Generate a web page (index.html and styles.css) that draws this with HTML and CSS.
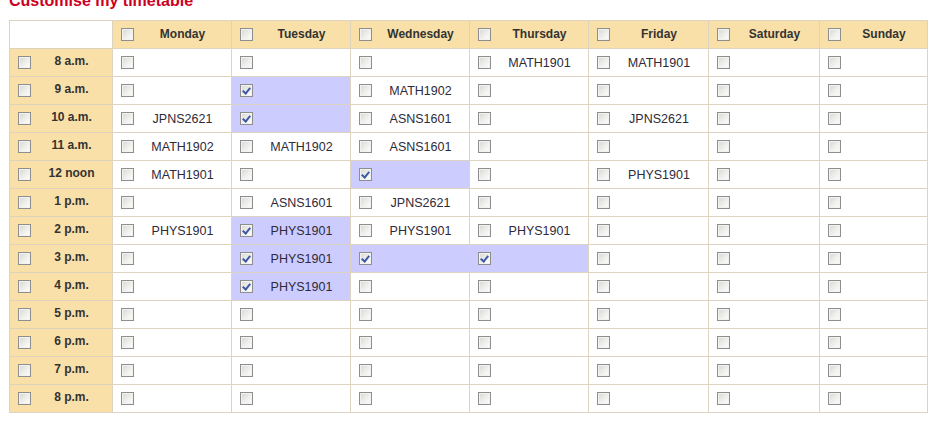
FILE: index.html
```html
<!DOCTYPE html>
<html lang="en">
<head>
<meta charset="utf-8">
<title>Customise my timetable</title>
<link rel="stylesheet" href="styles.css">
</head>
<body>
<div class="page">
<h2 class="title">Customise my timetable</h2>
<table class="tt">
<colgroup>
<col class="c-time"><col class="c-day"><col class="c-day"><col class="c-day"><col class="c-day"><col class="c-fri"><col class="c-sat"><col class="c-sun">
</colgroup>
<thead>
<tr>
<th class="corner"></th>
<th class="day"><label class="cell"><input type="checkbox" class="cb"><span class="txt">Monday</span></label></th>
<th class="day"><label class="cell"><input type="checkbox" class="cb"><span class="txt">Tuesday</span></label></th>
<th class="day"><label class="cell"><input type="checkbox" class="cb"><span class="txt">Wednesday</span></label></th>
<th class="day"><label class="cell"><input type="checkbox" class="cb"><span class="txt">Thursday</span></label></th>
<th class="day"><label class="cell"><input type="checkbox" class="cb"><span class="txt">Friday</span></label></th>
<th class="day"><label class="cell"><input type="checkbox" class="cb"><span class="txt">Saturday</span></label></th>
<th class="day"><label class="cell"><input type="checkbox" class="cb"><span class="txt">Sunday</span></label></th>
</tr>
</thead>
<tbody>
<tr>
<th class="time"><label class="cell"><input type="checkbox" class="cb"><span class="txt">8 a.m.</span></label></th>
<td><label class="cell"><input type="checkbox" class="cb"><span class="code"></span></label></td>
<td><label class="cell"><input type="checkbox" class="cb"><span class="code"></span></label></td>
<td><label class="cell"><input type="checkbox" class="cb"><span class="code"></span></label></td>
<td><label class="cell"><input type="checkbox" class="cb"><span class="code">MATH1901</span></label></td>
<td><label class="cell"><input type="checkbox" class="cb"><span class="code">MATH1901</span></label></td>
<td><label class="cell"><input type="checkbox" class="cb"><span class="code"></span></label></td>
<td><label class="cell"><input type="checkbox" class="cb"><span class="code"></span></label></td>
</tr>
<tr>
<th class="time"><label class="cell"><input type="checkbox" class="cb"><span class="txt">9 a.m.</span></label></th>
<td><label class="cell"><input type="checkbox" class="cb"><span class="code"></span></label></td>
<td class="on"><label class="cell"><input type="checkbox" class="cb" checked><span class="code"></span></label></td>
<td><label class="cell"><input type="checkbox" class="cb"><span class="code">MATH1902</span></label></td>
<td><label class="cell"><input type="checkbox" class="cb"><span class="code"></span></label></td>
<td><label class="cell"><input type="checkbox" class="cb"><span class="code"></span></label></td>
<td><label class="cell"><input type="checkbox" class="cb"><span class="code"></span></label></td>
<td><label class="cell"><input type="checkbox" class="cb"><span class="code"></span></label></td>
</tr>
<tr>
<th class="time"><label class="cell"><input type="checkbox" class="cb"><span class="txt">10 a.m.</span></label></th>
<td><label class="cell"><input type="checkbox" class="cb"><span class="code">JPNS2621</span></label></td>
<td class="on"><label class="cell"><input type="checkbox" class="cb" checked><span class="code"></span></label></td>
<td><label class="cell"><input type="checkbox" class="cb"><span class="code">ASNS1601</span></label></td>
<td><label class="cell"><input type="checkbox" class="cb"><span class="code"></span></label></td>
<td><label class="cell"><input type="checkbox" class="cb"><span class="code">JPNS2621</span></label></td>
<td><label class="cell"><input type="checkbox" class="cb"><span class="code"></span></label></td>
<td><label class="cell"><input type="checkbox" class="cb"><span class="code"></span></label></td>
</tr>
<tr>
<th class="time"><label class="cell"><input type="checkbox" class="cb"><span class="txt">11 a.m.</span></label></th>
<td><label class="cell"><input type="checkbox" class="cb"><span class="code">MATH1902</span></label></td>
<td><label class="cell"><input type="checkbox" class="cb"><span class="code">MATH1902</span></label></td>
<td><label class="cell"><input type="checkbox" class="cb"><span class="code">ASNS1601</span></label></td>
<td><label class="cell"><input type="checkbox" class="cb"><span class="code"></span></label></td>
<td><label class="cell"><input type="checkbox" class="cb"><span class="code"></span></label></td>
<td><label class="cell"><input type="checkbox" class="cb"><span class="code"></span></label></td>
<td><label class="cell"><input type="checkbox" class="cb"><span class="code"></span></label></td>
</tr>
<tr>
<th class="time"><label class="cell"><input type="checkbox" class="cb"><span class="txt">12 noon</span></label></th>
<td><label class="cell"><input type="checkbox" class="cb"><span class="code">MATH1901</span></label></td>
<td><label class="cell"><input type="checkbox" class="cb"><span class="code"></span></label></td>
<td class="on"><label class="cell"><input type="checkbox" class="cb" checked><span class="code"></span></label></td>
<td><label class="cell"><input type="checkbox" class="cb"><span class="code"></span></label></td>
<td><label class="cell"><input type="checkbox" class="cb"><span class="code">PHYS1901</span></label></td>
<td><label class="cell"><input type="checkbox" class="cb"><span class="code"></span></label></td>
<td><label class="cell"><input type="checkbox" class="cb"><span class="code"></span></label></td>
</tr>
<tr>
<th class="time"><label class="cell"><input type="checkbox" class="cb"><span class="txt">1 p.m.</span></label></th>
<td><label class="cell"><input type="checkbox" class="cb"><span class="code"></span></label></td>
<td><label class="cell"><input type="checkbox" class="cb"><span class="code">ASNS1601</span></label></td>
<td><label class="cell"><input type="checkbox" class="cb"><span class="code">JPNS2621</span></label></td>
<td><label class="cell"><input type="checkbox" class="cb"><span class="code"></span></label></td>
<td><label class="cell"><input type="checkbox" class="cb"><span class="code"></span></label></td>
<td><label class="cell"><input type="checkbox" class="cb"><span class="code"></span></label></td>
<td><label class="cell"><input type="checkbox" class="cb"><span class="code"></span></label></td>
</tr>
<tr>
<th class="time"><label class="cell"><input type="checkbox" class="cb"><span class="txt">2 p.m.</span></label></th>
<td><label class="cell"><input type="checkbox" class="cb"><span class="code">PHYS1901</span></label></td>
<td class="on"><label class="cell"><input type="checkbox" class="cb" checked><span class="code">PHYS1901</span></label></td>
<td><label class="cell"><input type="checkbox" class="cb"><span class="code">PHYS1901</span></label></td>
<td><label class="cell"><input type="checkbox" class="cb"><span class="code">PHYS1901</span></label></td>
<td><label class="cell"><input type="checkbox" class="cb"><span class="code"></span></label></td>
<td><label class="cell"><input type="checkbox" class="cb"><span class="code"></span></label></td>
<td><label class="cell"><input type="checkbox" class="cb"><span class="code"></span></label></td>
</tr>
<tr>
<th class="time"><label class="cell"><input type="checkbox" class="cb"><span class="txt">3 p.m.</span></label></th>
<td><label class="cell"><input type="checkbox" class="cb"><span class="code"></span></label></td>
<td class="on"><label class="cell"><input type="checkbox" class="cb" checked><span class="code">PHYS1901</span></label></td>
<td class="on"><label class="cell"><input type="checkbox" class="cb" checked><span class="code"></span></label></td>
<td class="on"><label class="cell"><input type="checkbox" class="cb" checked><span class="code"></span></label></td>
<td><label class="cell"><input type="checkbox" class="cb"><span class="code"></span></label></td>
<td><label class="cell"><input type="checkbox" class="cb"><span class="code"></span></label></td>
<td><label class="cell"><input type="checkbox" class="cb"><span class="code"></span></label></td>
</tr>
<tr>
<th class="time"><label class="cell"><input type="checkbox" class="cb"><span class="txt">4 p.m.</span></label></th>
<td><label class="cell"><input type="checkbox" class="cb"><span class="code"></span></label></td>
<td class="on"><label class="cell"><input type="checkbox" class="cb" checked><span class="code">PHYS1901</span></label></td>
<td><label class="cell"><input type="checkbox" class="cb"><span class="code"></span></label></td>
<td><label class="cell"><input type="checkbox" class="cb"><span class="code"></span></label></td>
<td><label class="cell"><input type="checkbox" class="cb"><span class="code"></span></label></td>
<td><label class="cell"><input type="checkbox" class="cb"><span class="code"></span></label></td>
<td><label class="cell"><input type="checkbox" class="cb"><span class="code"></span></label></td>
</tr>
<tr>
<th class="time"><label class="cell"><input type="checkbox" class="cb"><span class="txt">5 p.m.</span></label></th>
<td><label class="cell"><input type="checkbox" class="cb"><span class="code"></span></label></td>
<td><label class="cell"><input type="checkbox" class="cb"><span class="code"></span></label></td>
<td><label class="cell"><input type="checkbox" class="cb"><span class="code"></span></label></td>
<td><label class="cell"><input type="checkbox" class="cb"><span class="code"></span></label></td>
<td><label class="cell"><input type="checkbox" class="cb"><span class="code"></span></label></td>
<td><label class="cell"><input type="checkbox" class="cb"><span class="code"></span></label></td>
<td><label class="cell"><input type="checkbox" class="cb"><span class="code"></span></label></td>
</tr>
<tr>
<th class="time"><label class="cell"><input type="checkbox" class="cb"><span class="txt">6 p.m.</span></label></th>
<td><label class="cell"><input type="checkbox" class="cb"><span class="code"></span></label></td>
<td><label class="cell"><input type="checkbox" class="cb"><span class="code"></span></label></td>
<td><label class="cell"><input type="checkbox" class="cb"><span class="code"></span></label></td>
<td><label class="cell"><input type="checkbox" class="cb"><span class="code"></span></label></td>
<td><label class="cell"><input type="checkbox" class="cb"><span class="code"></span></label></td>
<td><label class="cell"><input type="checkbox" class="cb"><span class="code"></span></label></td>
<td><label class="cell"><input type="checkbox" class="cb"><span class="code"></span></label></td>
</tr>
<tr>
<th class="time"><label class="cell"><input type="checkbox" class="cb"><span class="txt">7 p.m.</span></label></th>
<td><label class="cell"><input type="checkbox" class="cb"><span class="code"></span></label></td>
<td><label class="cell"><input type="checkbox" class="cb"><span class="code"></span></label></td>
<td><label class="cell"><input type="checkbox" class="cb"><span class="code"></span></label></td>
<td><label class="cell"><input type="checkbox" class="cb"><span class="code"></span></label></td>
<td><label class="cell"><input type="checkbox" class="cb"><span class="code"></span></label></td>
<td><label class="cell"><input type="checkbox" class="cb"><span class="code"></span></label></td>
<td><label class="cell"><input type="checkbox" class="cb"><span class="code"></span></label></td>
</tr>
<tr>
<th class="time"><label class="cell"><input type="checkbox" class="cb"><span class="txt">8 p.m.</span></label></th>
<td><label class="cell"><input type="checkbox" class="cb"><span class="code"></span></label></td>
<td><label class="cell"><input type="checkbox" class="cb"><span class="code"></span></label></td>
<td><label class="cell"><input type="checkbox" class="cb"><span class="code"></span></label></td>
<td><label class="cell"><input type="checkbox" class="cb"><span class="code"></span></label></td>
<td><label class="cell"><input type="checkbox" class="cb"><span class="code"></span></label></td>
<td><label class="cell"><input type="checkbox" class="cb"><span class="code"></span></label></td>
<td><label class="cell"><input type="checkbox" class="cb"><span class="code"></span></label></td>
</tr>
</tbody>
</table>
</div>
</body>
</html>
```
FILE: styles.css
```css
html, body {
  margin: 0;
  padding: 0;
  background: #ffffff;
}

.page {
  padding: 0 0 0 9px;
  font-family: "Liberation Sans", Arial, sans-serif;
  color: #333333;
}

.title {
  margin: -8px 0 10px 0;
  font-size: 16px;
  line-height: 18px;
  font-weight: bold;
  color: #cc0022;
}

.tt {
  border-collapse: collapse;
  table-layout: fixed;
  width: 918px;
  border: 1px solid #ddd3c1;
}

.c-time { width: 103px; }
.c-day { width: 119px; }
.c-fri { width: 120px; }
.c-sat { width: 111px; }
.c-sun { width: 108px; }

.tt th,
.tt td {
  border: 1px solid #ddd3c1;
  padding: 0;
  height: 27px;
  vertical-align: middle;
}

.tt thead th {
  background: #f9e0a9;
}

.tt thead th.corner {
  background: #ffffff;
}

.tt th.time {
  background: #f9e0a9;
}

.tt td.on {
  background: #ccccff;
}

.cell {
  display: flex;
  align-items: center;
  padding-left: 8px;
  height: 27px;
}

.cb {
  appearance: none;
  -webkit-appearance: none;
  margin: 0;
  width: 13px;
  height: 13px;
  flex: 0 0 13px;
  border: 1px solid #8e8e8e;
  background: linear-gradient(135deg, #d6d6d2 0%, #ededea 50%, #ffffff 100%);
  box-shadow: inset 0 0 0 1px #f2f2f0;
  position: relative;
}

.cb:checked::after {
  content: "";
  position: absolute;
  left: 3px;
  top: 1px;
  width: 3px;
  height: 6px;
  border-right: 2px solid #3f58a6;
  border-bottom: 2px solid #3f58a6;
  transform: rotate(40deg);
}

.txt {
  flex: 1;
  text-align: center;
  font-size: 12px;
  font-weight: bold;
  color: #333333;
  line-height: 14px;
}

.day .txt {
  padding-bottom: 2px;
}

.time .txt {
  padding-bottom: 4px;
}

.code {
  flex: 1;
  text-align: center;
  font-size: 12.5px;
  color: #2e2a3a;
  line-height: 14px;
}
```
